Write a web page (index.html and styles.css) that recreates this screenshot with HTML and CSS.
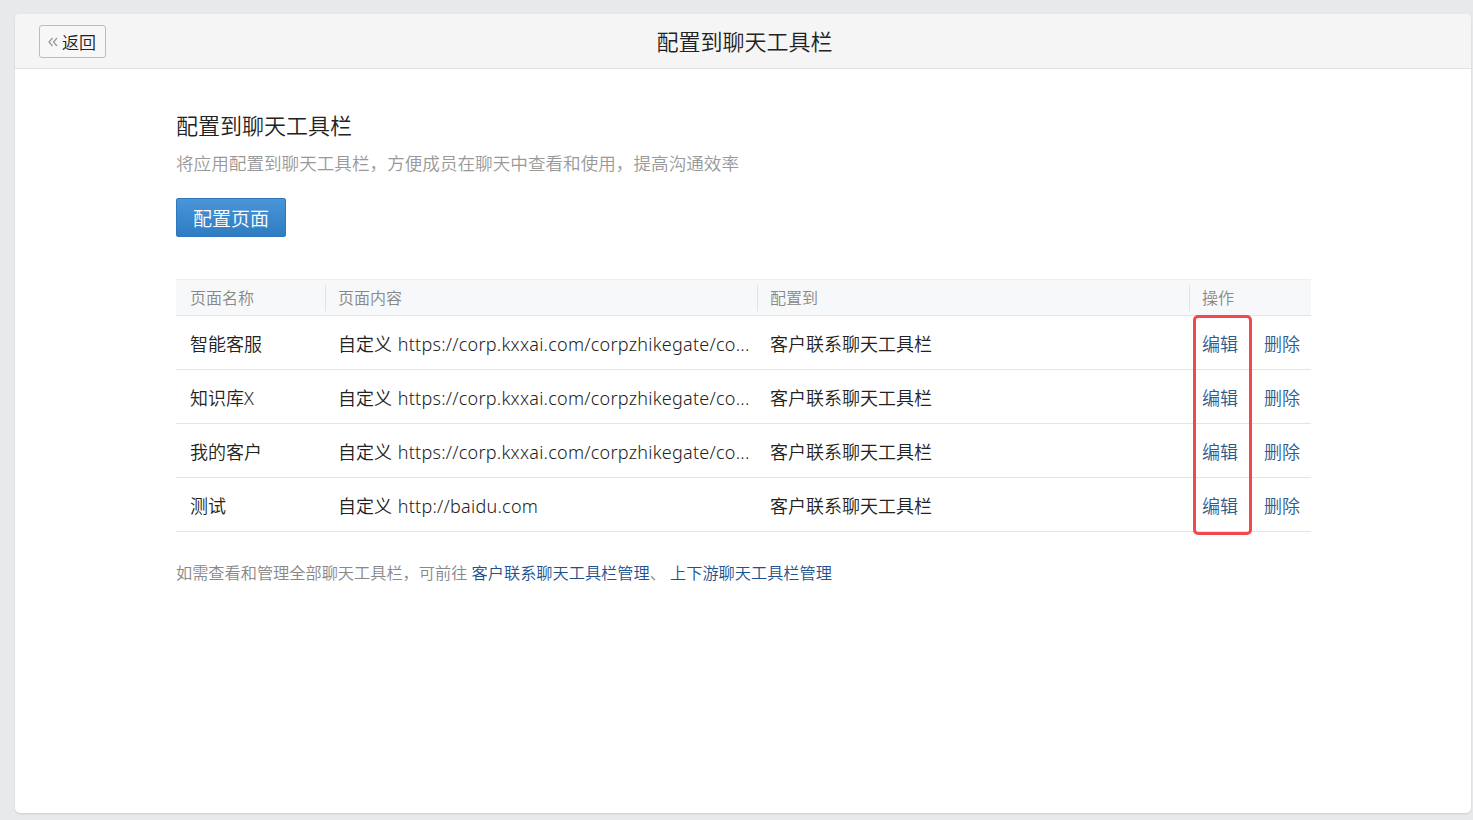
FILE: index.html
```html
<!DOCTYPE html>
<html lang="zh">
<head>
<meta charset="utf-8">
<title>配置到聊天工具栏</title>
<link rel="stylesheet" href="styles.css">
</head>
<body>
<div class="card">
  <div class="topbar">
    <button class="back"><svg class="back-ico" width="13" height="12" viewBox="0 0 13 12"><path d="M5.5 2 L2 6 L5.5 10 M10 2 L6.5 6 L10 10" fill="none" stroke="#999" stroke-width="1.3"/></svg>返回</button>
    <div class="top-title">配置到聊天工具栏</div>
  </div>
  <div class="main">
    <h1 class="title">配置到聊天工具栏</h1>
    <p class="desc">将应用配置到聊天工具栏，方便成员在聊天中查看和使用，提高沟通效率</p>
    <button class="primary">配置页面</button>
    <div class="table-wrap">
      <table class="tbl">
        <colgroup><col class="c1"><col class="c2"><col class="c3"><col class="c4"></colgroup>
        <thead>
          <tr><th><span>页面名称</span></th><th><span class="sep">页面内容</span></th><th><span class="sep">配置到</span></th><th><span class="sep">操作</span></th></tr>
        </thead>
        <tbody>
          <tr><td>智能客服</td><td><div class="ell">自定义 <span class="url">https://corp.kxxai.com/corpzhikegate/co...</span></div></td><td>客户联系聊天工具栏</td><td class="ops"><a>编辑</a><a>删除</a></td></tr>
          <tr><td>知识库X</td><td><div class="ell">自定义 <span class="url">https://corp.kxxai.com/corpzhikegate/co...</span></div></td><td>客户联系聊天工具栏</td><td class="ops"><a>编辑</a><a>删除</a></td></tr>
          <tr><td>我的客户</td><td><div class="ell">自定义 <span class="url">https://corp.kxxai.com/corpzhikegate/co...</span></div></td><td>客户联系聊天工具栏</td><td class="ops"><a>编辑</a><a>删除</a></td></tr>
          <tr><td>测试</td><td><div class="ell">自定义 <span class="url">http://baidu.com</span></div></td><td>客户联系聊天工具栏</td><td class="ops"><a>编辑</a><a>删除</a></td></tr>
        </tbody>
      </table>
      <div class="highlight"></div>
    </div>
    <p class="foot">如需查看和管理全部聊天工具栏，可前往 <a>客户联系聊天工具栏管理</a>、 <a>上下游聊天工具栏管理</a></p>
  </div>
</div>
</body>
</html>
```
FILE: styles.css
```css
* { box-sizing: border-box; }
html, body { margin: 0; padding: 0; }
body {
  background: #e8e9eb;
  font-family: "Noto Sans", "Noto Sans CJK SC", sans-serif;
  font-weight: 350;
  color: #222;
  padding: 14px 2px 7px 15px;
  height: 820px;
}
.card {
  background: #fff;
  border-radius: 5px;
  height: 799px;
  box-shadow: 0 1px 2px rgba(0,0,0,0.12);
  overflow: hidden;
}
.topbar {
  height: 55px;
  background: #f5f5f5;
  border-bottom: 1px solid #e2e2e2;
  display: flex;
  align-items: center;
  position: relative;
  padding-left: 24px;
}
.back {
  height: 33px;
  width: 67px;
  border: 1px solid #bbb;
  border-radius: 3px;
  background: #f7f7f7;
  font-family: inherit;
  font-weight: inherit;
  font-size: 17px;
  color: #222;
  display: flex;
  align-items: center;
  padding: 0 0 0 7px;
  gap: 2px;
  margin-top: 1px;
}
.top-title {
  position: absolute;
  left: 0; right: 0;
  top: 12px;
  line-height: 30px;
  text-align: center;
  font-size: 22px;
  color: #222;
  pointer-events: none;
  padding-left: 3px;
}
.main {
  padding: 41px 0 0 161px;
  width: 1296px;
}
.title {
  margin: 0;
  font-size: 22px;
  font-weight: inherit;
  line-height: 30px;
  color: #222;
}
.desc {
  margin: 10px 0 0;
  font-size: 17.6px;
  line-height: 26px;
  color: #999;
}
.primary {
  margin-top: 22px;
  width: 110px;
  height: 39px;
  border: 1px solid #2f78bd;
  border-radius: 2px;
  background: linear-gradient(#4a95d8, #2f7cc2);
  color: #fff;
  font-family: inherit;
  font-weight: inherit;
  font-size: 19px;
  padding: 0;
  display: block;
}
.table-wrap {
  position: relative;
  margin-top: 42px;
}
.tbl {
  width: 1135px;
  border-collapse: collapse;
  table-layout: fixed;
}
.c1 { width: 149px; }
.c2 { width: 432px; }
.c3 { width: 432px; }
.c4 { width: 122px; }
.tbl thead tr {
  background: #f7f8fa;
  border-top: 1px solid #eceef1;
  border-bottom: 1px solid #e4e6ea;
}
.tbl th {
  height: 36px;
  text-align: left;
  font-weight: inherit;
  font-size: 16px;
  color: #888;
  padding: 0;
}
.tbl th span { display: block; padding-left: 14px; line-height: 26px; }
.tbl th span.sep { border-left: 1px solid #e2e2e2; padding-left: 12px; }
.tbl td {
  height: 54px;
  font-size: 18px;
  color: #222;
  padding: 0 0 0 13px;
  border-bottom: 1px solid #e5e5e5;
  white-space: nowrap;
}
.tbl td:first-child { padding-left: 14px; }
.ell {
  overflow: hidden;
  text-overflow: ellipsis;
  white-space: nowrap;
  word-spacing: 1px;
}
.url { letter-spacing: 0.25px; }
.ops a {
  color: #2e5a8c;
  margin-right: 26px;
  cursor: pointer;
}
.highlight {
  position: absolute;
  left: 1017px;
  top: 36px;
  width: 59px;
  height: 220px;
  border: 3px solid #f04a4c;
  border-radius: 5px;
  pointer-events: none;
}
.foot {
  margin: 28px 0 0;
  font-size: 16.2px;
  color: #888;
}
.foot a { color: #1d5190; }
```
